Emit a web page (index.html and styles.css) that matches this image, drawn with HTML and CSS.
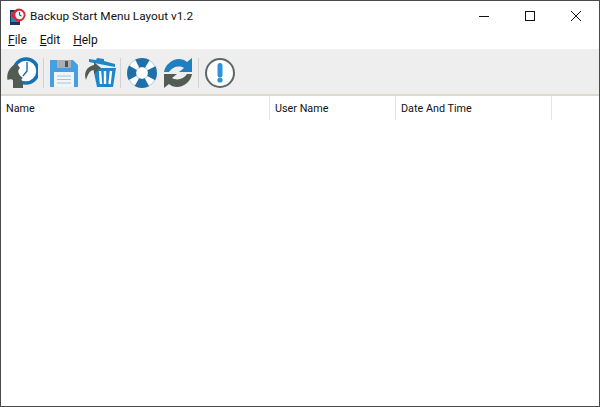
FILE: index.html
```html
<!DOCTYPE html>
<html lang="en">
<head>
    <meta charset="UTF-8">
    <title>Backup Start Menu Layout v1.2</title>
    <link rel="stylesheet" href="styles.css">
</head>
<body>
    <div class="fenetre">
        <div class="titre">
            <svg class="logo" width="18" height="18" viewBox="0 0 18 18">
                <rect x="1" y="3" width="10" height="15" fill="#123a5c"/>
                <rect x="2" y="5" width="8" height="10" fill="#1f86c8"/>
                <circle cx="10" cy="8" r="6.500" fill="#e0252f"/>
                <circle cx="10.500" cy="8" r="4.200" fill="#f4f8fb"/>
                <path d="M10.500 5v3l2 1" stroke="#1a5e96" stroke-width="1.200" fill="none"/>
                <path d="M1 8l5-3v7z" fill="#e0252f"/>
            </svg>
            <span class="nom">Backup Start Menu Layout v1.2</span>
            <div class="boutons">
                <div class="bouton"><svg width="12" height="12" viewBox="0 0 12 12"><path d="M1 6.500h10" stroke="#111" fill="none"/></svg></div>
                <div class="bouton"><svg width="12" height="12" viewBox="0 0 12 12"><rect x="1.500" y="1.500" width="9" height="9" stroke="#111" fill="none"/></svg></div>
                <div class="bouton"><svg width="12" height="12" viewBox="0 0 12 12"><path d="M1 1l10 10M11 1L1 11" stroke="#111" fill="none"/></svg></div>
            </div>
        </div>
        <div class="menu">
            <span><u>F</u>ile</span>
            <span><u>E</u>dit</span>
            <span><u>H</u>elp</span>
        </div>
        <div class="outils">
            <svg class="icone" width="32" height="32" viewBox="0 0 32 32">
                <circle cx="20" cy="14" r="12" fill="#fff" stroke="#1272b5" stroke-width="3.500"/>
                <path d="M21 5v9l-4 5" stroke="#1272b5" stroke-width="1.400" fill="none"/>
                <path d="M7 31V24C7 22 4 22 1.500 23C0 15 5 8 11 7L14 11C11 13 12 18 17 21C14 22 16 25 17 26V31z" fill="#535b55"/>
            </svg>
            <div class="sep"></div>
            <svg class="icone icone-serre" width="30" height="30" viewBox="0 0 30 30">
                <path d="M0 2h23l5 5v22H0z" fill="#459fe2"/>
                <rect x="7" y="2" width="14" height="8" fill="#a9aeb0"/>
                <rect x="15" y="3" width="3" height="6" fill="#4d5557"/>
                <rect x="4" y="14" width="20" height="15" fill="#f1f5f8"/>
                <path d="M7 18h14M7 21.500h14M7 25h14" stroke="#a5c5de" stroke-width="1.200"/>
            </svg>
            <svg class="icone icone-serre" width="32" height="32" viewBox="0 0 32 32">
                <path d="M12 3l1-2 7 1v2l11 3v3L5 5V2z" fill="#1f86c8"/>
                <path d="M9 11H32l-3 19H13z" fill="#1f86c8"/>
                <path d="M16 14l1 13M21 14v13M27 14l-1.500 13" stroke="#fff" stroke-width="2.400"/>
                <path d="M2 23C-1 15 4 9 10 8V5l7 6-7 6v-4c-4 0-6 4-8 10z" fill="#535b55"/>
            </svg>
            <div class="sep"></div>
            <svg class="icone icone-large" width="30" height="30" viewBox="0 0 30 30">
                <circle cx="15" cy="15" r="10.500" fill="#fff" stroke="#fff" stroke-width="9"/>
                <circle cx="15" cy="15" r="14.700" fill="none" stroke="#9dbbd2" stroke-width="0.800"/>
                <circle cx="15" cy="15" r="6.200" fill="none" stroke="#9dbbd2" stroke-width="0.800"/>
                <circle cx="15" cy="15" r="10.500" fill="none" stroke="#1f6fa8" stroke-width="9" stroke-dasharray="10.500 6" stroke-dashoffset="5.250"/>
            </svg>
            <svg class="icone" width="30" height="30" viewBox="0 0 30 30">
                <path d="M1 14C2 7 9 1 16 1C19 1 22 2 24 4L29 0V14H16L21 10C16 7 9 9 6 14z" fill="#1f7fc0"/>
                <path d="M1 14C2 7 9 1 16 1C19 1 22 2 24 4L29 0V14H16L21 10C16 7 9 9 6 14z" fill="#535b55" transform="rotate(180 15 15)"/>
            </svg>
            <div class="sep"></div>
            <svg class="icone" width="30" height="30" viewBox="0 0 30 30">
                <circle cx="15" cy="15" r="14" fill="#fff" stroke="#5d6668" stroke-width="2"/>
                <path d="M15 7.500v9.500" stroke="#2d94dc" stroke-width="5" stroke-linecap="round"/>
                <circle cx="15" cy="22" r="2.600" fill="#2d94dc"/>
            </svg>
        </div>
        <div class="entete">
            <div class="col col-nom">Name</div>
            <div class="col col-user">User Name</div>
            <div class="col col-date">Date And Time</div>
        </div>
        <div class="liste"></div>
    </div>
</body>
</html>
```

FILE: styles.css
```css
html, body {
    height: 100%;
}
body {
    font-family: Roboto, sans-serif;
    font-size: 12px;
    color: #111;
    background-color: white;
    margin: 0;
    padding: 0;
    overflow: hidden;
}
.fenetre {
    box-sizing: border-box;
    height: 100%;
    border: 1px solid #4a4a4a;
    display: flex;
    flex-direction: column;
}
.titre {
    height: 29px;
    display: flex;
    align-items: center;
    padding-left: 8px;
}
.logo {
    margin-right: 3px;
}
.nom {
    font-size: 11.800px;
}
.boutons {
    margin-left: auto;
    display: flex;
}
.bouton {
    width: 46px;
    height: 29px;
    display: flex;
    align-items: center;
    justify-content: center;
}
.menu {
    height: 19px;
    display: flex;
    align-items: center;
    gap: 13px;
    padding-left: 7px;
}
.outils {
    height: 43px;
    background-color: #eeeeee;
    border-bottom: 2px solid #dcd9cd;
    display: flex;
    align-items: center;
    padding-left: 5px;
    padding-top: 2px;
}
.icone {
    flex: none;
    margin-right: 5px;
}
.icone-serre {
    margin-right: 4px;
}
.icone-large {
    margin-right: 6px;
}
.sep {
    width: 1px;
    height: 30px;
    background-color: #d2d2d2;
    margin-right: 6px;
}
.entete {
    height: 24px;
    display: flex;
}
.col {
    box-sizing: border-box;
    border-right: 1px solid #e5e5e5;
    padding-left: 5px;
    line-height: 26px;
    font-size: 10.800px;
}
.col-nom {
    width: 269px;
}
.col-user {
    width: 126px;
}
.col-date {
    width: 156px;
}
.liste {
    flex: 1;
}
```
